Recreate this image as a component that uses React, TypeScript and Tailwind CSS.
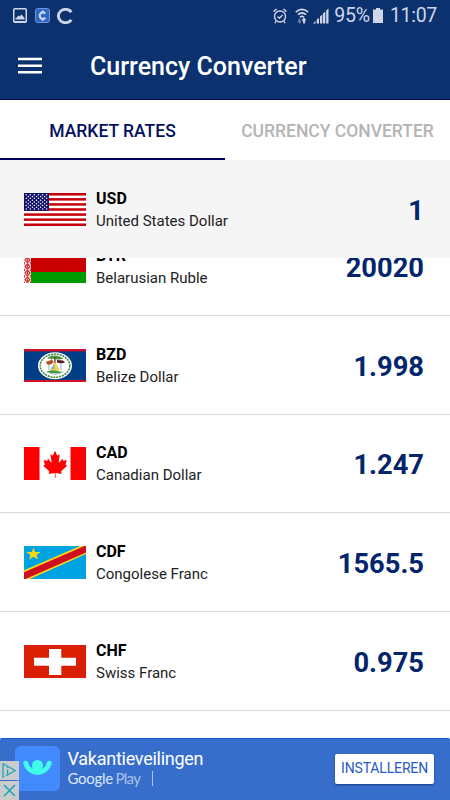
import type { ReactNode } from 'react';

type Currency = {
  code: string;
  name: string;
  rate: string;
  flag: ReactNode;
};

const STAR_ROWS = [0, 1, 2, 3, 4, 5, 6, 7, 8];

function UsaFlag() {
  return (
    <>
      <rect width="62" height="33" fill="#fff" />
      {[0, 2, 4, 6, 8, 10, 12].map((stripe) => (
        <rect key={stripe} y={(stripe * 33) / 13} width="62" height={33 / 13} fill="#c4000c" />
      ))}
      <rect width="25" height="17.8" fill="#10106b" />
      {STAR_ROWS.map((row) =>
        Array.from({ length: row % 2 ? 5 : 6 }).map((_, col) => (
          <circle
            key={`${row}-${col}`}
            cx={(row % 2 ? 4.3 : 2.2) + col * 4.1}
            cy={1.8 + row * 1.78}
            r="0.75"
            fill="#fff"
          />
        )),
      )}
    </>
  );
}

function BelarusFlag() {
  return (
    <>
      <rect width="62" height="22" fill="#c80000" />
      <rect y="22" width="62" height="11" fill="#009900" />
      <rect width="7" height="33" fill="#fff" />
      {[0, 1, 2, 3, 4].map((n) => (
        <g key={n} transform={`translate(0 ${n * 6.6})`} fill="none" stroke="#d8343c" strokeWidth="1.3">
          <path d="M3.5 .5 6 3.3 3.5 6.1 1 3.3zM3.5 2v2.6M.5 0v1.3M6.5 0v1.3M.5 5.3v1.3M6.5 5.3v1.3" />
        </g>
      ))}
    </>
  );
}

function BelizeFlag() {
  return (
    <>
      <rect width="62" height="33" fill="#d01028" />
      <rect y="2.4" width="62" height="28.6" fill="#003f87" />
      <ellipse cx="31" cy="16.7" rx="17" ry="13.5" fill="#fff" />
      <ellipse cx="31" cy="16.7" rx="14.8" ry="11.6" fill="none" stroke="#3f7d38" strokeWidth="1.5" strokeDasharray="2 .9" />
      <path d="M23 9.5q3-3.5 8-3t8.500 3q-3 1.500-8 .8t-8.500-.8z" fill="#4a9447" />
      <path d="M31 8v9" stroke="#7b4a20" strokeWidth="1.4" />
      <path d="M21.500 13l5.500-2 1 4-4 1zM27 9.500l3 4-3 1z" fill="#b5542b" />
      <path d="M33 11l6 .5 2 2-4 1-4-1z" fill="#5c1d1d" />
      <path d="M31 13l5 8q-5 3-10 0z" fill="#f0d84b" />
      <path d="M30 15l-3 5h4z" fill="#79b7dc" />
      <path d="M25 16v5M37 15v6" stroke="#a9cfe4" strokeWidth="1.4" />
      <path d="M22 23q4-2.500 9-1.500t9 1.500q-8 2.500-18 0z" fill="#4a9447" />
      <path d="M26 24.500q5 1.500 10 0" fill="none" stroke="#8cb6b0" strokeWidth="1" />
    </>
  );
}

function CanadaFlag() {
  return (
    <>
      <rect width="62" height="33" fill="#fff" />
      <rect width="15.500" height="33" fill="#f00" />
      <rect x="46.500" width="15.500" height="33" fill="#f00" />
      <path
        transform="translate(5.300 .4) scale(.83 .98)"
        d="M31 3.300l-2.500 4.600c-.3.500-.8.400-1.200.2L25.400 7l1.400 7.200c.3 1.300-.6 1.300-1.100.7l-3.200-3.500-.5 1.800c-.1.200-.3.500-.7.400l-4-.8 1.100 3.800c.2.800.4 1.200-.2 1.400l-1.400.7 6.900 5.500c.3.200.4.600.3.900l-.6 2c2.400-.3 4.500-.7 6.900-.9.200 0 .6.300.6.600L30.600 31h1.100l-.2-4.200c0-.3.300-.6.600-.6 2.400.2 4.500.6 6.900.9l-.6-2c-.1-.3 0-.7.300-.9l6.900-5.500-1.400-.7c-.6-.2-.4-.6-.2-1.400l1.100-3.800-4 .8c-.4.1-.6-.2-.7-.4l-.5-1.800-3.200 3.500c-.5.600-1.400.6-1.100-.7L36.600 7l-1.900 1.100c-.5.300-.9.300-1.200-.2z"
        fill="#f00"
      />
    </>
  );
}

function CongoFlag() {
  return (
    <>
      <rect width="62" height="33" fill="#00a3e2" />
      <path d="M0 24.300 56 0h6v8L6 33H0z" fill="#f9d616" />
      <path d="M0 26.300 60.500 0H62v6.500L1.500 33H0z" fill="#ce1021" />
      <path d="M9.500 1.500l1.600 4.400h5.600l-4.200 3.100 1.500 4.500-4.500-2.700L5 13.500 6.500 9 2.300 5.900h5.600z" fill="#f9d616" />
    </>
  );
}

function SwissFlag() {
  return (
    <>
      <rect width="62" height="33" fill="#da1f05" />
      <path d="M25 4h12.300v8.800H52v8H37.300V30H25v-9.200H10v-8h15z" fill="#fff" />
    </>
  );
}

const base: Currency = { code: 'USD', name: 'United States Dollar', rate: '1', flag: <UsaFlag /> };

const currencies: Currency[] = [
  { code: 'BYR', name: 'Belarusian Ruble', rate: '20020', flag: <BelarusFlag /> },
  { code: 'BZD', name: 'Belize Dollar', rate: '1.998', flag: <BelizeFlag /> },
  { code: 'CAD', name: 'Canadian Dollar', rate: '1.247', flag: <CanadaFlag /> },
  { code: 'CDF', name: 'Congolese Franc', rate: '1565.5', flag: <CongoFlag /> },
  { code: 'CHF', name: 'Swiss Franc', rate: '0.975', flag: <SwissFlag /> },
];

function CurrencyRow({ currency }: { currency: Currency }) {
  return (
    <div className="flex h-full items-center pl-6 pr-[26px] pt-px">
      <svg viewBox="0 0 62 33" className="h-[33px] w-[62px] shrink-0">
        {currency.flag}
      </svg>
      <div className="ml-[10px] flex-1 pt-px">
        <p className="text-[16px] font-bold leading-[22px] text-black">{currency.code}</p>
        <p className="text-[15px] leading-[22px] text-[#222]">{currency.name}</p>
      </div>
      <p className="pt-[3px] text-[27.300px] font-bold leading-8 text-[#03256c]">{currency.rate}</p>
    </div>
  );
}

function StatusBar() {
  return (
    <div className="flex h-[31px] items-center justify-between pl-[13px] pr-[13px] text-[#cfd6e6]">
      <div className="flex items-center gap-2">
        <svg viewBox="0 0 14 15" className="h-[15px] w-[14px]">
          <rect x=".75" y=".75" width="12.500" height="13.500" rx="1" fill="none" stroke="currentColor" strokeWidth="1.500" />
          <path d="M2.500 11.500V10h1L5 7.500l1.500 1L8.500 6.500l3 3.500v1.500zM1 13h12v1.500H1z" fill="currentColor" />
        </svg>
        <svg viewBox="0 0 15 15" className="h-[15px] w-[15px]">
          <rect x=".5" y=".5" width="14" height="14" rx="2.500" fill="#2d66c6" stroke="#6f96db" />
          <path d="M10.300 5.500a3.200 3.200 0 1 0 0 4.200M7.800 2.500v2M7.800 10.700v2" fill="none" stroke="currentColor" strokeWidth="2.100" />
        </svg>
        <svg viewBox="0 0 17 16" className="-ml-[2px] h-4 w-[17px]">
          <path d="M15.400 4.100A7.200 6.700 0 1 0 15.400 11.900" fill="none" stroke="currentColor" strokeWidth="2.900" />
        </svg>
      </div>
      <div className="flex items-center">
        <svg viewBox="0 0 14 16" className="h-4 w-[14px]" fill="none" stroke="currentColor" strokeWidth="1.400">
          <circle cx="7" cy="8.500" r="5.500" />
          <path d="M4.500 8.500l2 1.800 3-3.300M.6 3.600 3.600 1M10.400 1l3 2.600M3 13.200l-1 2M11 13.200l1 2" />
        </svg>
        <svg viewBox="0 0 14 16" className="ml-2 h-4 w-[14px]" fill="none" stroke="currentColor" strokeWidth="1.700">
          <path d="M.8 4.200q6.200-5.500 12.400 0M3 6.700q4-3.400 8 0M5 9.200q2-1.700 4 0" />
          <path d="M4.500 10.500v4M3 12.500l1.500 2 1.500-2" strokeOpacity=".45" />
          <path d="M9 15.500v-4.500M7.500 12.700 9 11l1.500 1.700" strokeWidth="1.900" />
        </svg>
        <svg viewBox="0 0 16 16" className="ml-1 h-4 w-4" fill="currentColor">
          <path d="M0 15.500l2.500-2.500v2.500zM3.700 11.500l2.300-1.500v5.500H3.700zM7 8.500l2.300-2v9H7zM10 5.500l2.300-2v12H10zM13.200 2.500l2.300-2v15h-2.300z" />
        </svg>
        <span className="ml-[5px] pt-px text-[19.500px] leading-6 tracking-[-0.200px]">95%</span>
        <svg viewBox="0 0 10 15" className="ml-[3px] h-[15px] w-[10px]" fill="currentColor">
          <path d="M3 0h4v1.500h3V15H0V1.500h3z" />
        </svg>
        <span className="ml-[7px] pt-px text-[19.500px] leading-6 tracking-[-0.300px]">11:07</span>
      </div>
    </div>
  );
}

function AdBanner() {
  return (
    <div className="relative flex h-[62.500px] shrink-0 items-start rounded-t-[2px] border-t border-[#0d5bcb] bg-[#376ecb]">
      <svg viewBox="0 0 45 45" className="ml-[15px] mt-[7px] h-[45px] w-[45px] shrink-0">
        <rect width="45" height="45" rx="6" fill="#448aff" />
        <circle cx="22.500" cy="19.500" r="5.500" fill="#40fde9" />
        <path d="M10.800 17.200a12 12 0 0 0 23.400 0" fill="none" stroke="#40fde9" strokeWidth="5" strokeLinecap="round" />
      </svg>
      <div className="ml-[7.500px] flex-1 pt-[9px] text-white">
        <p className="text-[18px] leading-[22px] tracking-[-0.260px]">Vakantieveilingen</p>
        <p className="-mt-px flex items-center font-['Lato',sans-serif] text-[15px] leading-[18px]">
          <span className="w-[46px] tracking-[-0.300px] text-[#dce7fa]">Google</span>
          <span className="ml-[2px] w-[25px] tracking-[-0.700px] text-[#a9c3ec]">Play</span>
          <span className="ml-[11px] mt-[2px] h-[15px] w-px bg-[#a9c3ec]" />
        </p>
      </div>
      <button className="mr-4 mt-[15px] h-[30px] w-[99px] whitespace-nowrap rounded-[2px] bg-white text-center text-[14px] tracking-[-0.150px] text-[#2759c4] shadow-[0_1px_2px_#163b8a]">
        INSTALLEREN
      </button>
      <div className="absolute left-0 top-[22px] flex flex-col gap-px">
        <svg viewBox="0 0 19 19" className="h-[19px] w-[19px] bg-[#cbcbcb]" fill="none" stroke="#18a6bd" strokeWidth="1.300">
          <path d="M6 14.800 15.300 9.500 3 2.800v13.400l1.300-.7" strokeLinejoin="round" />
          <path d="M7.500 8.500v5M7.500 5.800v1.300" />
        </svg>
        <svg viewBox="0 0 19 19" className="h-[19px] w-[19px] bg-[#cbcbcb]" stroke="#18a6bd" strokeWidth="1.500">
          <path d="M4 4l11 11M15 4 4 15" />
        </svg>
      </div>
    </div>
  );
}

export default function App() {
  return (
    <div className="flex h-[800px] w-[450px] flex-col overflow-hidden bg-white font-['Roboto',sans-serif]">
      <header className="h-[100px] shrink-0 border-b border-[#000a4a] bg-[#0b316f]">
        <StatusBar />
        <div className="flex items-center pl-[18px] pt-[18px]">
          <svg viewBox="0 0 24 18" className="-mt-[3px] h-[18px] w-6" fill="#fff">
            <path d="M0 .8h24v2.500H0zM0 7.400h24v2.500H0zM0 14h24v2.500H0z" />
          </svg>
          <h1 className="ml-12 text-[25px] font-medium leading-9 text-white">Currency Converter</h1>
        </div>
      </header>

      <nav className="grid h-[60px] shrink-0 grid-cols-2 text-[17.500px] font-medium">
        <div className="flex items-center justify-center border-b-2 border-[#00005c] pt-[4px] text-[#03125f]">MARKET RATES</div>
        <div className="flex items-center justify-center whitespace-nowrap pt-[2px] text-[#b4b4b4]">CURRENCY CONVERTER</div>
      </nav>

      <div className="h-[97.500px] shrink-0 bg-[#f5f5f5]">
        <CurrencyRow currency={base} />
      </div>

      <div className="flex-1 overflow-hidden">
        <ul className="-mt-[40.500px]">
          {currencies.map((currency) => (
            <li key={currency.code} className="h-[98.750px] border-b border-[#d8d8d8]">
              <CurrencyRow currency={currency} />
            </li>
          ))}
        </ul>
      </div>

      <AdBanner />
    </div>
  );
}
